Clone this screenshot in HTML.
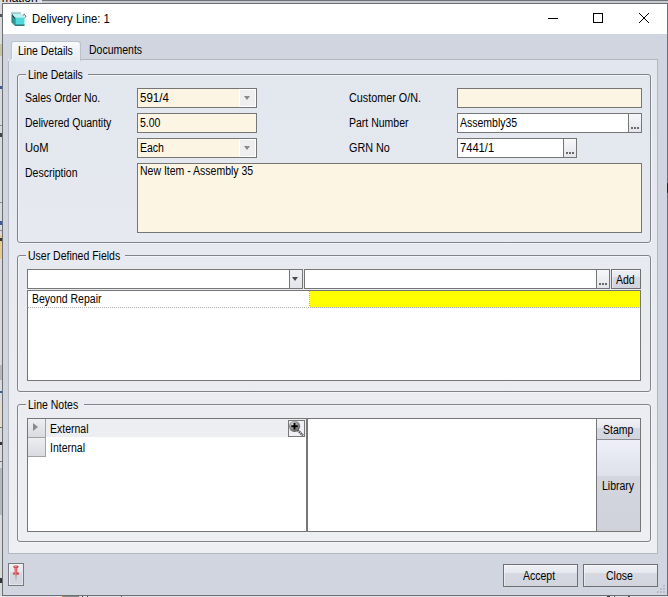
<!DOCTYPE html>
<html><head><meta charset="utf-8">
<style>
*{box-sizing:border-box;margin:0;padding:0}
html,body{width:668px;height:597px;overflow:hidden;background:#dcdcdc;position:relative}
body{font-family:"Liberation Sans",sans-serif;font-size:12px;color:#000}
.a{position:absolute}
.t{position:absolute;white-space:nowrap;line-height:14px;font-size:12px;transform-origin:0 0;transform:scaleX(.875);color:#000}
.win{position:absolute;left:2px;top:3px;width:666px;height:593px;background:#d1d5df;border:1px solid #6b6e73}
.title{position:absolute;left:3px;top:4px;width:664px;height:30px;background:#fff}
.page{position:absolute;left:8px;top:59px;width:650px;height:495px;border:1px solid #b3b8c0;background:linear-gradient(#e2e6ee 60px,#eeeff2 553px) fixed}
.pbg{position:absolute;background:linear-gradient(#e2e6ee 60px,#eeeff2 553px) fixed}
.grp{position:absolute;border:1px solid #808387;border-radius:3px;box-shadow:inset 1px 1px 0 #f4f5f8,1px 1px 0 #f4f5f8}
.inp{position:absolute;border:1px solid #767676;background:#fcf5e4}
.wht{background:#fff}
.ddb{position:absolute;top:0;right:0;width:17px;height:18px;border:1px solid #fff;background:#efefef}
.arr{position:absolute;left:4px;top:6px;width:0;height:0;border-left:3.5px solid transparent;border-right:3.5px solid transparent;border-top:4px solid #8a8a8a}
.ell{position:absolute;top:0;right:0;width:13px;height:18px;border-left:1px solid #767676;background:linear-gradient(#f7f8fa,#e3e5ea)}
.ell i{position:absolute;left:2px;top:13px;width:2px;height:2px;background:#6a6a6a;box-shadow:3px 0 #6a6a6a,6px 0 #6a6a6a}
.btn{position:absolute;border:1px solid #707070;background:linear-gradient(#eef0f6 0%,#e6e8ef 38%,#d6d9e1 39%,#d2d5dd 100%);box-shadow:inset 1px 1px 0 rgba(255,255,255,.45)}
</style></head><body>
<!-- background strip -->
<div class="a" style="left:0;top:0;width:668px;height:3px;background:#c8cbd0"></div>
<div class="a" style="left:42px;top:0;width:626px;height:1px;background:#6e7175"></div>
<div class="a" style="left:0;top:0;width:42px;height:3px;background:#dde1e6"></div>
<div class="a" style="left:-9px;top:-9px;font:12px/14px 'Liberation Sans',sans-serif;color:#000;white-space:nowrap">ormation</div>
<div class="a" style="left:0;top:3px;width:2px;height:594px;background:#d9dadc"></div>
<div class="a" style="left:0;top:14px;width:2px;height:3px;background:#555"></div>
<div class="a" style="left:0;top:44px;width:2px;height:12px;background:#c9c2a0"></div>
<div class="a" style="left:0;top:86px;width:2px;height:3px;background:#3a5ca8"></div>
<div class="a" style="left:0;top:125px;width:2px;height:1px;background:#8a8a8a"></div>
<div class="a" style="left:0;top:133px;width:2px;height:4px;background:#444"></div>
<div class="a" style="left:0;top:202px;width:2px;height:1px;background:#8a8a8a"></div>
<div class="a" style="left:0;top:221px;width:2px;height:4px;background:#3a5ca8"></div>
<div class="a" style="left:0;top:230px;width:2px;height:1px;background:#8a8a8a"></div>
<div class="a" style="left:0;top:235px;width:2px;height:24px;background:#e8c990"></div>
<div class="a" style="left:0;top:238px;width:2px;height:3px;background:#333"></div>
<div class="a" style="left:0;top:365px;width:2px;height:15px;background:#b8b8b8"></div>
<div class="a" style="left:0;top:391px;width:2px;height:2px;background:#3a5ca8"></div>
<div class="a" style="left:0;top:402px;width:2px;height:25px;background:#e4dcc8"></div>
<div class="a" style="left:0;top:427px;width:2px;height:1px;background:#777"></div>
<div class="a" style="left:0;top:442px;width:2px;height:3px;background:#333"></div>
<div class="a" style="left:0;top:461px;width:2px;height:1px;background:#777"></div>
<div class="a" style="left:0;top:468px;width:2px;height:47px;background:#b4b8c0"></div>
<div class="a" style="left:0;top:578px;width:2px;height:5px;background:#333"></div>
<div class="a" style="left:0;top:596px;width:668px;height:1px;background:#e6e6e6"></div>
<div class="a" style="left:62px;top:596px;width:1px;height:1px;background:#d88a30"></div>
<div class="a" style="left:63px;top:596px;width:16px;height:1px;background:#8a8a8a"></div>
<div class="a" style="left:82px;top:596px;width:1px;height:1px;background:#555"></div>
<div class="a" style="left:87px;top:596px;width:1px;height:1px;background:#555"></div>
<div class="a" style="left:121px;top:596px;width:1px;height:1px;background:#555"></div>
<div class="a" style="left:607px;top:596px;width:3px;height:1px;background:#444"></div>
<div class="a" style="left:614px;top:596px;width:1px;height:1px;background:#555"></div>
<div class="a" style="left:628px;top:596px;width:2px;height:1px;background:#555"></div>

<div class="win"></div>
<div class="title"></div>
<!-- icon -->
<svg class="a" style="left:8px;top:9px" width="22" height="19" viewBox="0 0 22 19">
  <path d="M3 3 H12.7 V5 H3 Z" fill="#9fcaca"/>
  <path d="M3.2 3.2 H12.5" stroke="#c9e4e4" stroke-width=".8"/>
  <path d="M4 5 L7 8.5 L7 16.5 L4 13.5 Z" fill="#2b9d9e"/>
  <path d="M4 5 L7 8.5 L7 10 L4 7 Z" fill="#114848"/>
  <path d="M4 5.5 V13.5" stroke="#2e6a6a" stroke-width="1"/>
  <path d="M5 5 H14 L16.5 8.5 H7.5 Z" fill="#bdf1f1"/>
  <path d="M7 8.5 H16.5 V16.5 H7 Z" fill="#4fdada"/>
  <path d="M7 16.2 H16.5" stroke="#17595a" stroke-width="1.2"/>
  <path d="M7.2 8.5 V16.5" stroke="#238a8b" stroke-width=".8"/>
  <path d="M4 13.5 L7 16.5" stroke="#5a8a8a" stroke-width="1"/>
  <path d="M14.8 6.5 L16.3 5.3 L18 7.5 L16.6 8.6" fill="#fff" stroke="#3c4c4c" stroke-width=".9"/>
</svg>
<div class="t" style="left:32px;top:12px;transform:scaleX(.94)">Delivery Line: 1</div>
<!-- window buttons -->
<div class="a" style="left:548px;top:18px;width:10px;height:1px;background:#000"></div>
<div class="a" style="left:593px;top:13px;width:10px;height:10px;border:1px solid #000"></div>
<svg class="a" style="left:638px;top:12px" width="12" height="12" viewBox="0 0 12 12"><path d="M1 1 L11 11 M11 1 L1 11" stroke="#000" stroke-width="1"/></svg>

<!-- tabs -->
<div class="page"></div>
<div class="a" style="left:11px;top:41px;width:70px;height:20px;border:1px solid #bcc2ca;border-bottom:none;border-radius:3px 3px 0 0;background:linear-gradient(#f7f9fb,#e8ebf0);box-shadow:inset 1px 1px 0 #f2fafd,inset -1px 0 0 #e4f4fa"></div>
<div class="a" style="left:8px;top:59px;width:4px;height:2px;background:#e6e9ef"></div><svg class="a" style="left:7px;top:57px" width="6" height="5"><path d="M1.5 4.5 L4.5 1.5" stroke="#c0c6ce" stroke-width="1"/></svg>
<div class="t" style="left:18px;top:44px">Line Details</div>
<div class="t" style="left:89px;top:43px">Documents</div>

<!-- group 1 -->
<div class="grp" style="left:17px;top:74px;width:634px;height:169px"></div>
<div class="pbg" style="left:26px;top:68px;width:62px;height:10px"></div>
<div class="t" style="left:28px;top:68px">Line Details</div>

<div class="t" style="left:25px;top:91px">Sales Order No.</div>
<div class="t" style="left:25px;top:116px">Delivered Quantity</div>
<div class="t" style="left:25px;top:141px;transform:scaleX(.93)">UoM</div>
<div class="t" style="left:25px;top:166px">Description</div>

<div class="inp" style="left:137px;top:88px;width:120px;height:20px"><div class="ddb"><div class="arr"></div></div></div>
<div class="t" style="left:140px;top:91px;transform:scaleX(.96)">591/4</div>
<div class="inp" style="left:137px;top:113px;width:120px;height:20px"></div>
<div class="t" style="left:140px;top:116px">5.00</div>
<div class="inp" style="left:137px;top:138px;width:120px;height:20px"><div class="ddb"><div class="arr"></div></div></div>
<div class="t" style="left:140px;top:141px">Each</div>
<div class="inp" style="left:137px;top:163px;width:505px;height:70px"></div>
<div class="t" style="left:140px;top:164px">New Item - Assembly 35</div>

<div class="t" style="left:349px;top:91px;transform:scaleX(.9)">Customer O/N.</div>
<div class="t" style="left:349px;top:116px">Part Number</div>
<div class="t" style="left:349px;top:141px;transform:scaleX(.9)">GRN No</div>

<div class="inp" style="left:457px;top:88px;width:185px;height:20px"></div>
<div class="inp wht" style="left:457px;top:113px;width:185px;height:20px"><div class="ell"><i></i></div></div>
<div class="t" style="left:460px;top:116px">Assembly35</div>
<div class="inp wht" style="left:457px;top:138px;width:120px;height:20px"><div class="ell"><i></i></div></div>
<div class="t" style="left:460px;top:141px;transform:scaleX(.93)">7441/1</div>

<!-- group 2 -->
<div class="grp" style="left:17px;top:255px;width:634px;height:137px"></div>
<div class="pbg" style="left:26px;top:249px;width:99px;height:10px"></div>
<div class="t" style="left:28px;top:249px">User Defined Fields</div>
<div class="inp wht" style="left:27px;top:269px;width:276px;height:20px"><div class="ddb" style="width:13px;border:none;border-left:1px solid #767676;background:linear-gradient(#eef0f4,#e4e6eb)"><div class="arr" style="left:2px;top:7px;border-top-color:#4a4a4a"></div></div></div>
<div class="inp wht" style="left:304px;top:269px;width:306px;height:20px"><div class="ell"><i></i></div></div>
<div class="btn" style="left:611px;top:269px;width:30px;height:20px"></div>
<div class="t" style="left:616px;top:273px">Add</div>
<div class="inp wht" style="left:27px;top:290px;width:614px;height:91px"></div>
<div class="a" style="left:310px;top:291px;width:330px;height:17px;background:#ffff00"></div>
<div class="a" style="left:309px;top:291px;width:1px;height:16px;background:repeating-linear-gradient(#a8a8a8 0 1px,transparent 1px 2px)"></div>
<div class="a" style="left:28px;top:307px;width:612px;height:1px;background:repeating-linear-gradient(90deg,#b0b0b0 0 1px,transparent 1px 2px)"></div>
<div class="t" style="left:32px;top:292px">Beyond Repair</div>

<!-- group 3 -->
<div class="grp" style="left:17px;top:404px;width:634px;height:138px"></div>
<div class="pbg" style="left:26px;top:398px;width:58px;height:10px"></div>
<div class="t" style="left:28px;top:398px">Line Notes</div>
<div class="inp wht" style="left:27px;top:418px;width:280px;height:114px"></div>
<div class="a" style="left:306px;top:418px;width:2px;height:114px;background:#7a7a7a"></div>
<div class="inp wht" style="left:307px;top:418px;width:290px;height:114px"></div>
<!-- row header -->
<div class="a" style="left:28px;top:419px;width:18px;height:19px;border-right:1px solid #a3a3a3;border-bottom:1px solid #a3a3a3;background:linear-gradient(#eceef1,#d9dbe0)"></div>
<div class="a" style="left:28px;top:438px;width:18px;height:19px;border-right:1px solid #a3a3a3;border-bottom:1px solid #a3a3a3;background:linear-gradient(#eceef1,#d9dbe0)"></div>
<div class="a" style="left:33px;top:423px;width:0;height:0;border-top:4.5px solid transparent;border-bottom:4.5px solid transparent;border-left:5px solid #8a8a8a"></div>
<div class="a" style="left:46px;top:419px;width:260px;height:18px;background:#eceef1"></div>
<div class="t" style="left:50px;top:422px">External</div>
<div class="t" style="left:50px;top:441px">Internal</div>
<!-- zoom icon -->
<div class="a" style="left:288px;top:420px;width:17px;height:17px;border:1px solid #7a7a7a;background:#eef0f5"></div>
<svg class="a" style="left:288px;top:420px" width="17" height="17" viewBox="0 0 17 17">
  <defs><radialGradient id="mg" cx=".4" cy=".35" r=".7"><stop offset="0" stop-color="#e8e8e8"/><stop offset=".6" stop-color="#8a8a8a"/><stop offset="1" stop-color="#505050"/></radialGradient></defs>
  <line x1="9.5" y1="10" x2="15" y2="15.5" stroke="#555" stroke-width="2.4" stroke-dasharray="1.6 .6"/>
  <circle cx="6.5" cy="6.3" r="5.6" fill="url(#mg)"/>
  <path d="M3.3 6.3 H9.7 M6.5 3.1 V9.5" stroke="#000" stroke-width="1.9"/>
</svg>
<!-- stamp/library -->
<div class="a" style="left:596px;top:418px;width:45px;height:114px;border:1px solid #767676;background:#d0d3db"></div>
<div class="a" style="left:597px;top:419px;width:43px;height:9px;background:linear-gradient(#f0f1f6,#e6e8ef)"></div>
<div class="a" style="left:597px;top:428px;width:43px;height:11px;background:linear-gradient(#d6d9e1,#d2d5dd)"></div>
<div class="a" style="left:597px;top:439px;width:43px;height:1px;background:#8a8d92"></div>
<div class="a" style="left:597px;top:440px;width:43px;height:36px;background:linear-gradient(#eeeff8,#dfe1ea)"></div>
<div class="a" style="left:597px;top:476px;width:43px;height:55px;background:linear-gradient(#d3d6de,#cfd2da)"></div>
<div class="t" style="left:603px;top:423px">Stamp</div>
<div class="t" style="left:602px;top:479px">Library</div>

<div class="a" style="left:667px;top:183px;width:1px;height:10px;background:#222"></div>
<!-- bottom -->
<div class="btn" style="left:8px;top:563px;width:16px;height:23px;border-color:#76797e;box-shadow:inset 1px 1px 0 #f0f1f5,inset -1px -1px 0 #e2e4ea"></div>
<svg class="a" style="left:9px;top:564px" width="14" height="21" viewBox="0 0 14 21">
  <defs><linearGradient id="pg" x1="0" x2="1"><stop offset="0" stop-color="#b82a2a"/><stop offset=".45" stop-color="#f27a7a"/><stop offset="1" stop-color="#a82020"/></linearGradient>
  <linearGradient id="ng" x1="0" y1="0" x2="0" y2="1"><stop offset="0" stop-color="#9a9a9a"/><stop offset="1" stop-color="#d0d0d0"/></linearGradient></defs>
  <rect x="6.2" y="10" width="1.6" height="7" fill="url(#ng)"/>
  <path d="M5.4 3.2 L8.4 3.2 L8.2 8 Q10.3 8.8 10.3 10.2 Q7 11.6 3.7 10.2 Q3.7 8.8 5.6 8 Z" fill="url(#pg)"/>
  <ellipse cx="6.9" cy="2.8" rx="2.8" ry="1.3" fill="#c73b3b"/>
  <ellipse cx="6.6" cy="2.6" rx="1.4" ry=".6" fill="#f3a0a0"/>
</svg>
<div class="btn" style="left:503px;top:564px;width:75px;height:23px"></div>
<div class="t" style="left:523px;top:569px">Accept</div>
<div class="btn" style="left:583px;top:564px;width:75px;height:23px"></div>
<div class="t" style="left:606px;top:569px">Close</div>
<!-- grip -->
<div class="a" style="left:663px;top:585px;width:2px;height:2px;background:#b9bdc5;box-shadow:-3px 3px #b9bdc5,0 3px #b9bdc5,-6px 6px #b9bdc5,-3px 6px #b9bdc5,0 6px #b9bdc5"></div>
</body></html>
